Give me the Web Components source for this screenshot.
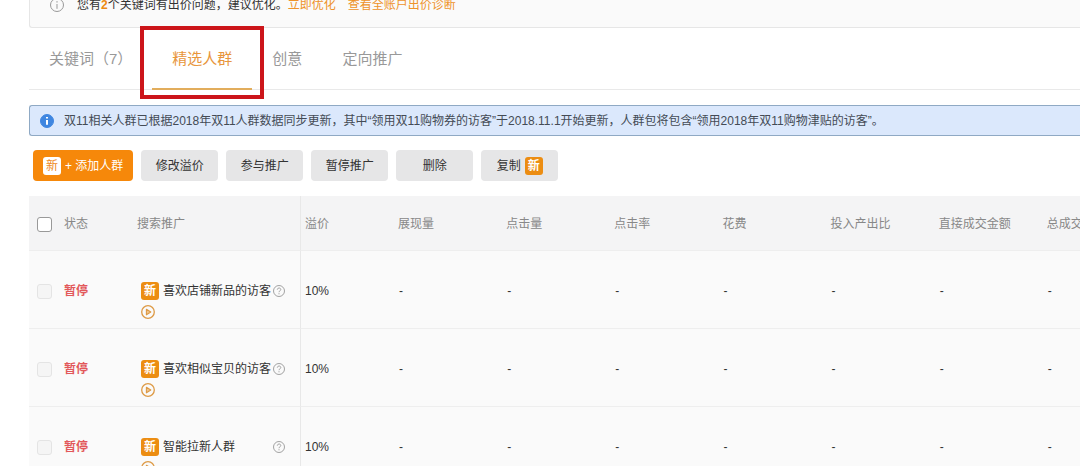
<!DOCTYPE html>
<html lang="zh-CN">
<head>
<meta charset="utf-8">
<title>精选人群</title>
<style>
  body { margin: 0; background: #fff; color: #333; overflow: hidden;
    font: 12px/20px "Liberation Sans", "Noto Sans CJK SC", sans-serif; }
</style>
</head>
<body>
<audience-page></audience-page>

<script>
const define = (name, css, html, setup) => {
  const template = document.createElement('template');
  template.innerHTML = `<style>*{box-sizing:border-box}${css}</style>${html}`;
  customElements.define(name, class extends HTMLElement {
    constructor() {
      super();
      this.attachShadow({ mode: 'open' }).append(template.content.cloneNode(true));
      if (setup) setup.call(this, this.shadowRoot);
    }
  });
};

define('new-badge', `
  :host { display: inline-flex; align-items: center; justify-content: center; flex: none;
    width: 18px; height: 18px; border-radius: 3px; background: var(--badge-bg, #ec8d12);
    color: var(--badge-color, #fff); font-size: 12px; line-height: 18px; font-weight: var(--badge-weight, 700); }
`, `新`);

define('info-icon', `
  :host { display: block; flex: none; width: 14px; height: 14px; }
  svg { display: block; }
`, `<svg width="14" height="14" viewBox="0 0 14 14" aria-hidden="true">
  <circle cx="7" cy="7" r="6.5" fill="var(--icon-fill, none)" stroke="var(--icon-ring, #999)"/>
  <path d="M7 3.1v1.5M7 6v4.8" stroke="var(--icon-mark, #999)" stroke-width="var(--icon-weight, 1)"/>
</svg>`);

define('help-icon', `
  :host { display: block; flex: none; width: 12px; height: 12px; }
  svg { display: block; }
`, `<svg width="12" height="12" viewBox="0 0 12 12" fill="none" stroke="#999" aria-hidden="true">
  <circle cx="6" cy="6" r="5.5" stroke-width=".9"/>
  <path d="M4.3 4.7C4.3 2.4 7.8 2.5 7.8 4.6C7.8 5.8 6 5.7 6 7.2M6 8.2v1.1" stroke-width=".9"/>
</svg>`);

define('play-icon', `
  :host { display: block; width: 14px; height: 14px; }
  svg { display: block; }
`, `<svg width="14" height="14" viewBox="0 0 14 14" fill="none" stroke="#dd9a45" aria-hidden="true">
  <circle cx="7" cy="7" r="6.3" stroke-width="1.3"/>
  <path d="M5.4 4.2L9.8 7L5.4 9.8Z" fill="#f0c48c" stroke-width="1.1" stroke-linejoin="round"/>
</svg>`);

define('bid-tip', `
  :host { display: flex; align-items: center; height: 33px; margin-top: -5px; padding: 0 20px 12px;
    background: #fafafa; border: 1px solid #e6e6e6; border-top: 0; border-right: 0; border-radius: 0 0 0 3px; }
  p { margin: 0 0 0 13px; }
  b { color: #ec8a13; }
  a { color: #ee932a; text-decoration: none; }
  a + a { margin-left: 12px; }
`, `<info-icon></info-icon><p>您有<b>2</b>个关键词有出价问题，建议优化。</p><a href="#optimize">立即优化</a><a href="#diagnose">查看全账户出价诊断</a>`);

define('tab-item', `
  :host { display: block; position: relative; }
  a { display: block; height: 62px; padding: 0 20px; line-height: 62px; font-size: 15px;
    color: #999; text-decoration: none; white-space: nowrap; }
  :host([active]) a { color: #e8963c; border-bottom: 2px solid #e2ad5c; }
  i { display: none; }
  :host([active]) i { display: block; position: absolute; inset: -2px -12px -9px; border: 4px solid #cc151a; }
`, `<a href="#tab"><slot></slot></a><i></i>`);

define('tab-bar', `
  :host { display: block; border-bottom: 1px solid #e9e9e9; }
  nav { display: flex; margin-bottom: -1px; }
`, `<nav><slot></slot></nav>`);

define('notice-bar', `
  :host { display: flex; align-items: center; gap: 10px; margin-top: 15px; padding: 5px 10px; height: 31px;
    box-sizing: border-box; background: #dbe8fc; border: 1px solid #8fa9c4; border-right: 0;
    border-radius: 3px 0 0 3px; white-space: nowrap; color: #444b55;
    --icon-fill: #3f86e0; --icon-ring: #3f86e0; --icon-mark: #fff; --icon-weight: 2; }
`, `<info-icon></info-icon><span><slot></slot></span>`);

define('action-button', `
  :host { display: block; }
  button { display: flex; align-items: center; justify-content: center; gap: 4px; min-width: 77px; height: 31px;
    margin: 0; padding: 0 10px; border: 0; border-radius: 4px; background: #e6e6e7; color: #333;
    font: inherit; white-space: nowrap; }
  :host([primary]) button { background: #f6880a; color: #fff;
    --badge-bg: #fff; --badge-color: #ee8a1c; --badge-weight: 400; }
`, `<button type="button"><slot></slot></button>`);

define('action-bar', `
  :host { display: flex; gap: 8px; padding: 14px 4px 15px; }
`, `<slot></slot>`);

define('audience-table', `
  :host { display: block; overflow: hidden; }
  table { table-layout: fixed; width: 100%; min-width: 1126px; border-collapse: separate; border-spacing: 0; }
  .pick { width: 35px; } .state { width: 73px; } .name { width: 164px; } .bid { width: 97px; }
  th, td { padding: 0; text-align: left; vertical-align: top; white-space: nowrap; font-weight: 400;
    border-bottom: 1px solid #eee; }
  th { height: 55px; padding-top: 18px; background: #f4f4f5; color: #888; }
  td { height: 78px; padding-top: 30px; background: #fafafa; }
  th:first-child, td:first-child { padding-left: 8px; }
  th:nth-child(3), td:nth-child(3) { border-right: 1px solid #e8e8e8; }
  th:nth-child(4), td:nth-child(4) { padding-left: 4px; }
  td:nth-child(3) { padding-left: 4px; }
  td:nth-child(n+5) { padding-left: 1px; }
  input { appearance: none; display: block; width: 15px; height: 15px; margin: 3px 0 0; background: #fff;
    border: 1px solid #999; border-radius: 3px; }
  input:disabled { background: #f5f5f5; border-color: #e4e4e4; }
  strong { color: #e2585a; }
  .title { display: flex; align-items: center; height: 20px; }
  .title span { width: 110px; margin-left: 4px; }
  play-icon { margin-top: 4px; }
`, `<table>
  <colgroup><col class="pick"><col class="state"><col class="name"><col class="bid"></colgroup>
  <thead><tr><th><input type="checkbox" aria-label="全选"></th></tr></thead>
  <tbody></tbody>
</table>`, function (root) {
  const heads = ['状态', '搜索推广', '溢价', '展现量', '点击量', '点击率', '花费', '投入产出比', '直接成交金额', '总成交金额'];
  const names = ['喜欢店铺新品的访客', '喜欢相似宝贝的访客', '智能拉新人群'];
  root.querySelector('thead tr').insertAdjacentHTML('beforeend', heads.map(h => `<th scope="col">${h}</th>`).join(''));
  root.querySelector('tbody').innerHTML = names.map(name => `<tr>
    <td><input type="checkbox" disabled aria-label="${name}"></td>
    <td><strong>暂停</strong></td>
    <td><div class="title"><new-badge></new-badge><span>${name}</span><help-icon></help-icon></div><play-icon></play-icon></td>
    <td>10%</td>${'<td>-</td>'.repeat(7)}</tr>`).join('');
});

define('audience-page', `
  :host { display: block; padding-left: 29px; overflow: hidden; }
`, `
  <bid-tip></bid-tip>
  <tab-bar>
    <tab-item>关键词（7）</tab-item>
    <tab-item active>精选人群</tab-item>
    <tab-item>创意</tab-item>
    <tab-item>定向推广</tab-item>
  </tab-bar>
  <notice-bar>双11相关人群已根据2018年双11人群数据同步更新，其中“领用双11购物券的访客”于2018.11.1开始更新，人群包将包含“领用2018年双11购物津贴的访客”。</notice-bar>
  <action-bar>
    <action-button primary><new-badge></new-badge><span>+ 添加人群</span></action-button>
    <action-button>修改溢价</action-button>
    <action-button>参与推广</action-button>
    <action-button>暂停推广</action-button>
    <action-button>删除</action-button>
    <action-button>复制<new-badge></new-badge></action-button>
  </action-bar>
  <audience-table></audience-table>
`);
</script>
</body>
</html>
